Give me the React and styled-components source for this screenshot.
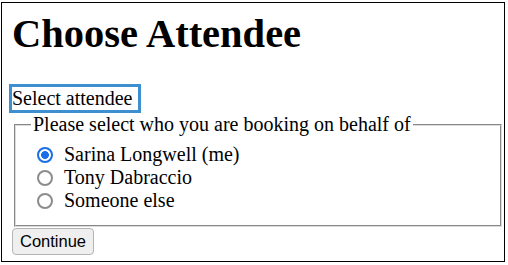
import React, { useState } from "react";
import styled, { createGlobalStyle } from "styled-components";

const GlobalStyles = createGlobalStyle`
  body {
    margin: 0;
    background: #fff;
  }
`;

// Outer frame of the captured page
const Frame = styled.div`
  box-sizing: border-box;
  width: 504px;
  height: 260px;
  margin: 2px 0 0 1px;
  border: 1px solid #000;
  padding: 8px 0 0 10px;
  font-family: "Liberation Serif", "Times New Roman", serif;
  font-size: 20px;
  line-height: 23px;
  color: #000;
`;

const Title = styled.h1`
  margin: 0 0 27px;
  font-size: 40.5px;
  line-height: 46px;
  font-weight: 700;
`;

const StepHeading = styled.div`
  display: inline-block;
  padding: 0 5px 0 0;
  border: 3px solid #3d8fd0;
  margin-left: -3px;
  vertical-align: top;
`;

const Fieldset = styled.fieldset`
  margin: 0 2px;
  padding: 7px 15px 13px;
  border: 2px groove #dcdcdc;
`;

const Legend = styled.legend`
  padding: 0 2px;
`;

const Option = styled.label`
  display: flex;
  align-items: center;
  height: 23px;
`;

const Radio = styled.input`
  appearance: none;
  box-sizing: border-box;
  width: 16px;
  height: 16px;
  margin: 0 11px 0 6px;
  border: 2px solid #8c8c8c;
  border-radius: 50%;
  background: #fff;

  &:checked {
    border-color: #1a6fe6;
    background: radial-gradient(circle, #1a6fe6 0 3.6px, #fff 4.2px);
  }
`;

const Button = styled.button`
  display: block;
  margin-top: 1px;
  height: 27px;
  padding: 0 7px;
  font-family: "Liberation Sans", Arial, sans-serif;
  font-size: 16.5px;
  color: #000;
  background: #efefef;
  border: 1px solid #b4b4b4;
  border-radius: 4px;
`;

const attendees = ["Sarina Longwell (me)", "Tony Dabraccio", "Someone else"];

const App = () => {
  const [selected, setSelected] = useState(attendees[0]);

  return (
    <>
      <GlobalStyles />
      <Frame>
        <Title>Choose Attendee</Title>
        <StepHeading>Select attendee</StepHeading>
        <Fieldset>
          <Legend>Please select who you are booking on behalf of</Legend>
          {attendees.map((name) => (
            <Option key={name}>
              <Radio
                type="radio"
                name="attendee"
                checked={selected === name}
                onChange={() => setSelected(name)}
              />
              {name}
            </Option>
          ))}
        </Fieldset>
        <Button type="button">Continue</Button>
      </Frame>
    </>
  );
};

export default App;
